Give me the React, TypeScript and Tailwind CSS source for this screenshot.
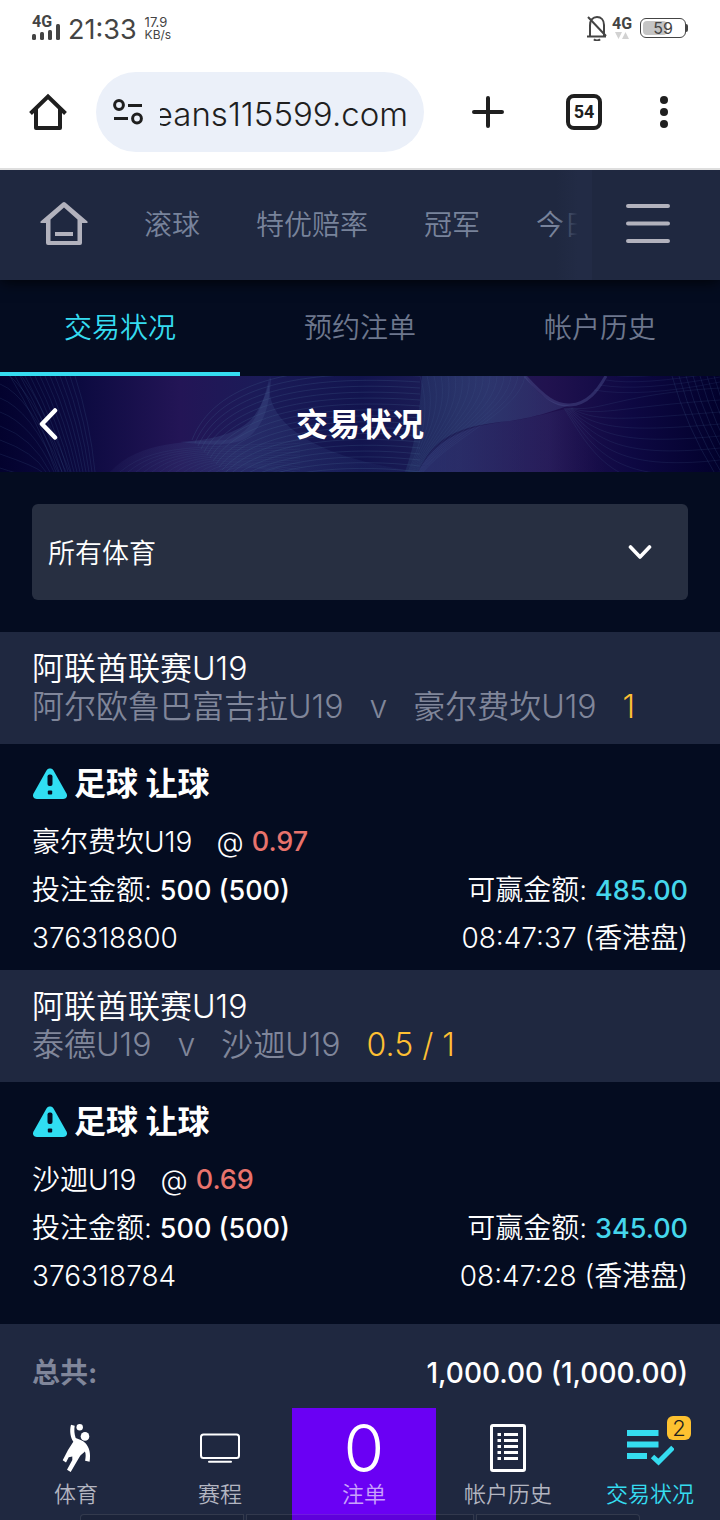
import React from "react";

type Bet = {
  league: string;
  home: string;
  away: string;
  line: string;
  pick: string;
  odds: string;
  win: string;
  id: string;
  time: string;
};

const bets: Bet[] = [
  {
    league: "阿联酋联赛U19",
    home: "阿尔欧鲁巴富吉拉U19",
    away: "豪尔费坎U19",
    line: "1",
    pick: "豪尔费坎U19",
    odds: "0.97",
    win: "485.00",
    id: "376318800",
    time: "08:47:37 (香港盘)",
  },
  {
    league: "阿联酋联赛U19",
    home: "泰德U19",
    away: "沙迦U19",
    line: "0.5 / 1",
    pick: "沙迦U19",
    odds: "0.69",
    win: "345.00",
    id: "376318784",
    time: "08:47:28 (香港盘)",
  },
];

function StatusBar() {
  return (
    <div className="flex h-14 items-center justify-between px-8 text-[#444]">
      <div className="flex items-center gap-2">
        <div className="flex w-7 flex-col">
          <span className="font-['Roboto',sans-serif] text-base leading-3 font-bold">4G</span>
          <svg className="-mt-1 h-4 w-7" viewBox="0 0 28 16" fill="#444" aria-hidden="true">
            <rect x="0" y="10" width="4" height="6" rx="1.5" />
            <rect x="8" y="8" width="4" height="8" rx="1.5" />
            <rect x="16" y="6" width="4" height="10" rx="1.5" />
            <rect x="24" y="0" width="4" height="16" rx="1.5" />
          </svg>
        </div>
        <span className="pt-1 text-[27px] leading-8">21:33</span>
        <span className="flex flex-col text-[13px] leading-[13px]">
          <span>17.9</span>
          <span className="text-xs leading-3">KB/s</span>
        </span>
      </div>
      <div className="flex items-center gap-1">
        <svg className="h-[26px] w-[22px]" viewBox="0 0 22 26" fill="none" stroke="#444" strokeWidth="2" aria-hidden="true">
          <path d="M4 21V10.500C4 5 7 2 11 2s7 3 7 8v11" />
          <path d="M1 21.500h19M2 2l18 19" />
          <path d="M8 24.200c1.500 1.600 4.500 1.600 6 0" />
        </svg>
        <div className="flex w-5 flex-col items-center">
          <span className="font-['Roboto',sans-serif] text-base leading-[14px] font-bold">4G</span>
          <svg className="h-2 w-4" viewBox="0 0 16 8" fill="#d2d2d2" aria-hidden="true">
            <path d="M1 1h7L4.500 8zM8 8h7L11.500 1z" />
          </svg>
        </div>
        <div className="ml-1 flex items-center">
          <div className="relative flex h-5 w-[46px] items-center justify-center rounded-md border border-[#444]">
            <div className="absolute top-[2px] bottom-[2px] left-[2px] w-6 rounded-sm bg-[#c5c5c5]" />
            <span className="relative text-base leading-4">59</span>
          </div>
          <div className="h-2 w-[2px] rounded-r-sm bg-[#444]" />
        </div>
      </div>
    </div>
  );
}

function BrowserBar() {
  return (
    <div className="flex h-28 items-center pr-2 pl-7">
      <button type="button" aria-label="Home" className="flex h-10 w-10 shrink-0 items-center justify-center">
        <svg className="h-10 w-10" viewBox="0 0 40 40" fill="none" stroke="#1f1f1f" strokeWidth="4" strokeLinejoin="round" aria-hidden="true">
          <path d="M2.500 21.500L20 4.500l17.500 17" strokeLinejoin="miter" />
          <path d="M8 17v19h24V17" />
        </svg>
      </button>
      <label className="ml-7 flex h-20 min-w-0 flex-1 items-center rounded-full bg-[#ebf0f9] px-4">
        <svg className="h-8 w-8 shrink-0" viewBox="0 0 32 32" fill="none" stroke="#1f1f1f" strokeWidth="3" aria-label="Address" role="img">
          <circle cx="7" cy="9" r="4.400" />
          <path d="M16 9.500h14M2 22.500h14" />
          <circle cx="25" cy="22.500" r="4.400" />
        </svg>
        <input
          dir="rtl"
          type="text"
          defaultValue="eans115599.com"
          className="ml-4 w-full min-w-0 bg-transparent pt-1 text-[33px] leading-10 font-[350] text-[#1f1f1f] outline-none"
        />
      </label>
      <button type="button" aria-label="New tab" className="flex h-16 w-32 shrink-0 items-center justify-center">
        <svg className="h-8 w-8" viewBox="0 0 32 32" stroke="#1f1f1f" strokeWidth="4" strokeLinecap="round" aria-hidden="true">
          <path d="M16 2v28M2 16h28" />
        </svg>
      </button>
      <button type="button" aria-label="Tabs" className="flex h-16 w-16 shrink-0 items-center justify-center">
        <span className="flex h-9 w-9 items-center justify-center rounded-lg border-4 border-[#1f1f1f] font-['Roboto',sans-serif] text-lg font-bold text-[#1f1f1f]">
          54
        </span>
      </button>
      <button type="button" aria-label="More" className="flex h-16 w-24 shrink-0 items-center justify-center">
        <svg className="h-8 w-2" viewBox="0 0 8 32" fill="#1f1f1f" aria-hidden="true">
          <circle cx="4" cy="4" r="4" />
          <circle cx="4" cy="16" r="4" />
          <circle cx="4" cy="28" r="4" />
        </svg>
      </button>
    </div>
  );
}

function TopNav() {
  return (
    <nav className="relative z-10 flex h-[110px] bg-[#1f2840] text-[28px] font-[350] text-[#78839b] shadow-[0_2px_14px_rgba(0,0,0,0.8)]">
      <div className="relative flex min-w-0 flex-1 items-center gap-14 overflow-hidden pl-10 whitespace-nowrap">
        <a href="#home" aria-label="首页" className="shrink-0">
          <svg className="h-12 w-12" viewBox="0 0 48 48" fill="#b2b2bd" aria-hidden="true">
            <path
              fillRule="evenodd"
              d="M22.700 1.600q1.300-1.200 2.600 0L47.500 20.600v1.400H42v20q0 2-2 2H8q-2 0-2-2V22H.5v-1.400zM24 6.500L10.500 18.500V40h27V18.500z"
            />
            <path d="M15 31h18v4H15z" />
          </svg>
        </a>
        <a href="#live">滚球</a>
        <a href="#special">特优赔率</a>
        <a href="#outright">冠军</a>
        <a href="#today">今日</a>
        <div className="absolute top-0 right-0 bottom-0 w-9 bg-linear-to-r from-[#222b45]/0 to-[#222b45] to-60%" />
      </div>
      <button type="button" aria-label="菜单" className="flex w-32 shrink-0 items-center pl-[34px]">
        <svg className="h-10 w-11 overflow-visible" viewBox="0 0 44 40" stroke="#b2b2bd" strokeWidth="4" strokeLinecap="round" aria-hidden="true">
          <path d="M2 1h40M2 18.500h40M2 36h40" />
        </svg>
      </button>
    </nav>
  );
}

function Tabs() {
  const tab = "flex items-center justify-center border-b-4 pt-1";
  return (
    <nav className="grid h-24 grid-cols-3 text-[28px] font-[350] text-[#6d778d]">
      <a href="#status" aria-current="page" className={`${tab} border-[#35dcf0] text-[#35dcf0]`}>
        交易状况
      </a>
      <a href="#reserved" className={`${tab} border-transparent`}>
        预约注单
      </a>
      <a href="#history" className={`${tab} border-transparent`}>
        帐户历史
      </a>
    </nav>
  );
}

const steps = (n: number) => Array.from({ length: n }, (_, i) => i);

function BannerArt() {
  return (
    <svg className="absolute inset-0 h-full w-full" viewBox="0 0 720 96" preserveAspectRatio="none" aria-hidden="true">
      <defs>
        <linearGradient id="night">
          <stop offset="0" stopColor="#03022e" />
          <stop offset="0.110" stopColor="#0c0a40" />
          <stop offset="0.250" stopColor="#231556" />
          <stop offset="0.360" stopColor="#1b1b58" />
          <stop offset="0.500" stopColor="#12144e" />
          <stop offset="0.640" stopColor="#202058" />
          <stop offset="0.760" stopColor="#21124f" />
          <stop offset="0.880" stopColor="#0d0842" />
          <stop offset="1" stopColor="#02012c" />
        </linearGradient>
        <linearGradient id="mist" x1="0" y1="0" x2="1" y2="0">
          <stop offset="0" stopColor="#38407c" stopOpacity="0.100" />
          <stop offset="0.400" stopColor="#384580" stopOpacity="0.400" />
          <stop offset="1" stopColor="#2a4078" stopOpacity="0.100" />
        </linearGradient>
        <linearGradient id="veil">
          <stop offset="0" stopColor="#2b4272" stopOpacity="0.350" />
          <stop offset="0.500" stopColor="#364a80" stopOpacity="0.550" />
          <stop offset="1" stopColor="#3a3f7a" stopOpacity="0.450" />
        </linearGradient>
        <linearGradient id="haze">
          <stop offset="0" stopColor="#343e7c" stopOpacity="0.550" />
          <stop offset="0.700" stopColor="#33306e" stopOpacity="0.350" />
          <stop offset="1" stopColor="#2a1a5c" stopOpacity="0" />
        </linearGradient>
      </defs>
      <rect width="720" height="96" fill="url(#night)" />
      <path d="M110 96C140 64 190 66 228 64C256 54 262 30 270 0C262 40 300 80 420 96z" fill="url(#mist)" />
      <path d="M180 66C210 64 240 58 254 40C264 26 268 12 271 0C270 26 266 46 250 60C236 70 210 70 180 66z" fill="#3a4680" opacity="0.400" />
      <path d="M422 0H525C540 22 556 30 570 29C550 36 540 40 510 45C450 50 432 66 418 96H405C418 60 420 30 422 0z" fill="url(#veil)" />
      <path d="M418 96C434 66 460 50 510 45C535 42 556 34 572 32C590 50 600 76 606 96z" fill="url(#haze)" />
      <path d="M525 0C545 22 556 30 570 29C588 28 598 14 606 0" fill="none" stroke="#454a86" strokeWidth="3" opacity="0.500" />
      <g fill="none" stroke="#42608c" strokeWidth="1">
        {steps(10).map((i) => (
          <path key={i} opacity="0.200" d={`M0 ${i * 14 - 20}Q${28 + i} ${i * 14 - 8} ${70 - i * 4} 96`} />
        ))}
        {steps(14).map((i) => (
          <path key={i} opacity="0.220" d={`M${10 + i * 5} 0Q${38 + i * 4} 46 ${56 + i * 3} 96`} />
        ))}
        {steps(18).map((i) => (
          <path key={i} opacity="0.260" d={`M${192 + i * 3} ${64 + i * 3}C${214 + i * 4} ${8 + i * 5} ${290 + i * 4} ${-14 + i * 6} 420 ${i * 6 - 6}`} />
        ))}
        {steps(14).map((i) => (
          <path key={i} opacity="0.150" d={`M${120 + i * 8} 96C${160 + i * 6} ${62 + i * 2} ${220 + i * 3} ${76 + i} 300 ${64 + i * 3}`} />
        ))}
        {steps(16).map((i) => (
          <path key={i} opacity="0.160" d={`M${420 + i * 7} 0C${430 + i * 6} 34 ${424 + i * 2} 60 ${408 + i} 96`} />
        ))}
        {steps(9).map((i) => (
          <path key={i} opacity="0.180" d={`M${572 - i} 32C${600 - i} ${36 + i * 5} ${620 - i} ${18 + i * 13} 720 ${12 + i * 12}`} />
        ))}
        {steps(5).map((i) => (
          <path key={i} opacity="0.160" d={`M${594 + i * 6} ${14 - i * 5}Q640 ${22 - i * 6} 720 ${6 - i * 5}`} />
        ))}
        {steps(7).map((i) => (
          <path key={i} opacity="0.220" d={`M${672 + i * 7} 0Q${686 + i * 7} 50 ${714 + i * 7} 96`} />
        ))}
      </g>
    </svg>
  );
}

function Banner() {
  return (
    <header className="relative h-24 overflow-hidden">
      <BannerArt />
      <div className="relative grid h-full grid-cols-[96px_1fr_96px] items-center">
        <button type="button" aria-label="返回" className="flex h-full items-center justify-center">
          <svg className="h-8 w-5" viewBox="0 0 20 32" fill="none" stroke="#fff" strokeWidth="4.500" strokeLinecap="round" strokeLinejoin="round" aria-hidden="true">
            <path d="M17 2.500L4 16l13 13.500" />
          </svg>
        </button>
        <h1 className="pt-[2px] text-center text-[32px] font-bold text-white">交易状况</h1>
      </div>
    </header>
  );
}

function SportFilter() {
  return (
    <div className="relative m-8">
      <select
        aria-label="体育"
        className="h-24 w-full appearance-none rounded-md bg-[#272f41] px-4 pt-1 text-[27px] font-[350] text-white outline-none"
      >
        <option>所有体育</option>
      </select>
      <svg className="pointer-events-none absolute top-10 right-9 h-4 w-6" viewBox="0 0 24 16" fill="none" stroke="#fff" strokeWidth="3.600" strokeLinecap="round" strokeLinejoin="round" aria-hidden="true">
        <path d="M2.500 3L12 13l9.500-10" />
      </svg>
    </div>
  );
}

function BetItem({ bet }: { bet: Bet }) {
  return (
    <article>
      <header className="bg-[#1f2840] px-8 py-[18px] text-[32px] leading-[38px] font-[350] whitespace-nowrap">
        <h2 className="text-white">{bet.league}</h2>
        <p className="flex gap-[26px] text-[#80869a]">
          <span>{bet.home}</span>
          <span>v</span>
          <span>{bet.away}</span>
          <span className="text-[#fdbf33]">{bet.line}</span>
        </p>
      </header>
      <div className="px-8 pt-4 pb-2 text-[28px] leading-[48px] font-[350] text-white">
        <h3 className="mb-[10px] flex items-center gap-[6px] text-[32px] leading-[48px] font-bold">
          <svg className="h-9 w-9" viewBox="0 0 36 36" aria-hidden="true">
            <path d="M14.500 4.500c1.500-2.600 5.500-2.600 7 0l13 23c1.400 2.600-.3 5.500-3.300 5.500H4.800c-3 0-4.700-2.900-3.300-5.500z" fill="#30def2" />
            <rect x="15.500" y="8.500" width="5" height="11.500" rx="2" fill="#040c20" />
            <rect x="15.800" y="24.500" width="4.400" height="4" rx="1" fill="#040c20" />
          </svg>
          足球 让球
        </h3>
        <p className="flex h-12">
          <span>{bet.pick}</span>
          <span className="ml-6">@</span>
          <span className="ml-2 text-[27px] font-medium text-[#e8736c]">{bet.odds}</span>
        </p>
        <p className="flex h-12 justify-between">
          <span>
            投注金额: <span className="text-[27px] font-medium">500 (500)</span>
          </span>
          <span>
            可赢金额: <span className="text-[27px] font-medium text-[#45d6ec]">{bet.win}</span>
          </span>
        </p>
        <p className="flex h-12 justify-between">
          <span>{bet.id}</span>
          <span>{bet.time}</span>
        </p>
      </div>
    </article>
  );
}

function Total() {
  return (
    <div className="mt-4 flex h-[84px] items-center justify-between bg-[#1f2840] px-8 pt-[14px] text-[28px] font-medium text-white">
      <span className="font-bold text-[#80869a]">总共:</span>
      <span>1,000.00 (1,000.00)</span>
    </div>
  );
}

function BottomNav() {
  const item = "flex flex-col items-center pt-4";
  const label = "text-[22px] leading-8 font-[350]";
  return (
    <nav className="relative grid h-28 grid-cols-[148fr_144fr_144fr_144fr_140fr] overflow-hidden bg-[#1f2840] text-[#b3b5c1]">
      <a href="#sports" className="flex flex-col items-center pt-4 pl-1">
        <svg className="mb-[6px] h-12 w-12" viewBox="0 0 48 48" fill="#fff" aria-hidden="true">
          <circle cx="27.700" cy="3.200" r="3.200" />
          <circle cx="33" cy="12.400" r="4.300" />
          <path d="M19 .8l3.700 1c-.7 4-.4 8.500 1 12.300 3.300 1.600 7 2.400 9.600 4.800 4.200 4.600 5.600 10.600 4.300 18.900l-4.500-1c.6-3.600 1-6.500-.2-9.200-1.600 1.700-4 3-5.600 5.600L18.700 48 15 45.700l5.300-9.700v-3.600l-3.600.8-2.700 5.200-3.300-2.100L16 26l5.300-8.300C18.500 14 17.300 6.500 19 .8z" />
        </svg>
        <span className={label}>体育</span>
      </a>
      <a href="#schedule" className={item}>
        <svg className="mb-[6px] h-12 w-12" viewBox="0 0 48 48" fill="none" stroke="#fff" strokeWidth="2" aria-hidden="true">
          <rect x="5" y="10.500" width="38" height="23.500" rx="2.500" />
          <path d="M13 37.800h22" strokeLinecap="round" />
        </svg>
        <span className={label}>赛程</span>
      </a>
      <a href="#slip" className="flex flex-col items-center bg-[#6a00f4] pt-4 text-[#c9a2fb]">
        <span className="mb-[6px] text-[66px] leading-[48px] font-light text-white">0</span>
        <span className={label}>注单</span>
      </a>
      <a href="#history" className={item}>
        <svg className="mb-[6px] h-12 w-12" viewBox="0 0 48 48" fill="none" stroke="#fff" strokeWidth="3" aria-hidden="true">
          <rect x="7.500" y="1.500" width="33" height="45" rx="1.500" />
          <path d="M13.500 10.500h3.500M20 10.500h14M13.500 16.500h3.500M20 16.500h14M13.500 22.500h3.500M20 22.500h14M13.500 28.500h3.500M20 28.500h14M13.500 34.500h3.500M20 34.500h14" />
        </svg>
        <span className={label}>帐户历史</span>
      </a>
      <a href="#status" aria-current="page" className="relative flex flex-col items-center pt-4 text-[#35dcf0]">
        <svg className="mb-[6px] h-12 w-12" viewBox="0 0 48 48" fill="none" stroke="#35dcf0" strokeWidth="6" aria-hidden="true">
          <path d="M1 9h31.500M1 20.500h31.500M1 32h20" />
          <path d="M26.500 32.500l6 5.500L47 23.500" strokeWidth="5" />
        </svg>
        <span className="absolute top-2 right-[29px] flex h-6 w-6 items-center justify-center rounded-md bg-[#fdc130] text-[22px] leading-6 font-light text-[#1f1f1f]">
          2
        </span>
        <span className={label}>交易状况</span>
      </a>
      <div className="pointer-events-none absolute inset-x-20 top-[106px] grid h-10 grid-cols-[165fr_228fr_165fr] gap-[2px]">
        <div className="rounded-tl border border-white/10 bg-black/10" />
        <div className="border border-white/10 bg-black/10" />
        <div className="rounded-tr border border-white/10 bg-black/10" />
      </div>
    </nav>
  );
}

export default function App() {
  return (
    <div className="min-h-screen bg-[#040c20] font-['Inter','Noto_Sans_CJK_SC',sans-serif]" lang="zh-CN">
      <div className="relative z-20 border-b-2 border-[#dedede] bg-white">
        <StatusBar />
        <BrowserBar />
      </div>
      <TopNav />
      <Tabs />
      <Banner />
      <main>
        <SportFilter />
        {bets.map((bet) => (
          <BetItem key={bet.id} bet={bet} />
        ))}
      </main>
      <Total />
      <BottomNav />
    </div>
  );
}
